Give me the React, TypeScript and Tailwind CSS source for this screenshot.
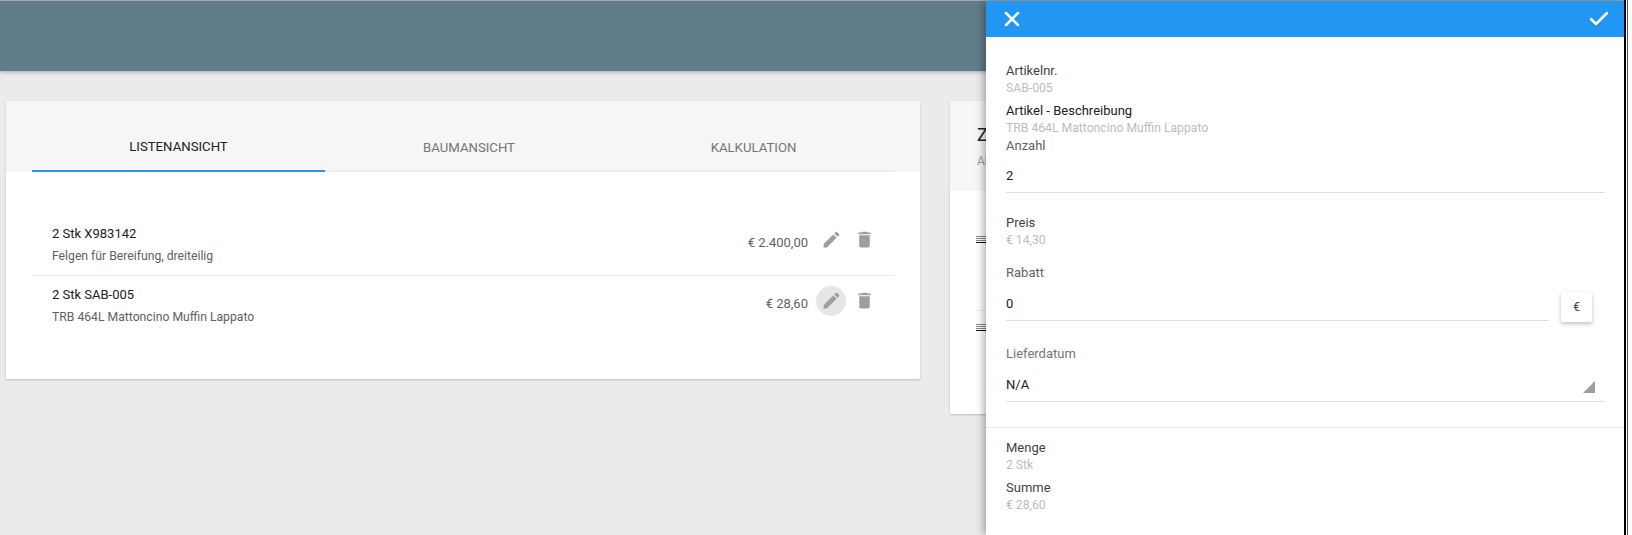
import { Check, X } from 'lucide-react';

const font = { fontFamily: 'Roboto, sans-serif' };

const PencilIcon = () => (
  <svg viewBox="0 0 24 24" className="w-[21px] h-[21px] mb-[1px] fill-[#9e9e9e]">
    <path d="M3 17.25V21h3.75L17.81 9.94l-3.75-3.75L3 17.25zM20.71 7.04a1 1 0 0 0 0-1.41l-2.34-2.34a1 1 0 0 0-1.41 0l-1.83 1.83 3.75 3.75 1.83-1.83z" />
  </svg>
);

const TrashIcon = () => (
  <svg viewBox="0 0 24 24" className="w-[21px] h-[21px] mb-[1px] fill-[#9e9e9e]">
    <path d="M6 19c0 1.100.9 2 2 2h8c1.100 0 2-.9 2-2V7H6v12zM19 4h-3.500l-1-1h-5l-1 1H5v2h14V4z" />
  </svg>
);

const ListGlyph = () => (
  <div className="w-[10px] flex flex-col gap-[1px]">
    <div className="h-[1px] bg-[#8a8a8a]" />
    <div className="h-[1px] bg-[#8a8a8a]" />
    <div className="h-[1px] bg-[#8a8a8a]" />
    <div className="h-[1px] bg-[#111111]" />
  </div>
);

const Row = ({ title, sub, price, active }: { title: string; sub: string; price: string; active?: boolean }) => (
  <div className="h-[61px] flex justify-between pl-[20px] pr-[15px] border-b border-[#eeeeee] last:border-b-0">
    <div className="pt-[9px]">
      <p className="text-[13px] leading-[20px] text-[#212121]">{title}</p>
      <p className="text-[12.2px] leading-[16px] mt-[4px] text-[#616161]">{sub}</p>
    </div>
    <div className="flex items-start pt-[10px]">
      <span className="text-[13px] leading-[20px] text-[#616161] mt-[8px] mr-[8px]">{price}</span>
      <span className={`w-[30px] h-[30px] rounded-full flex items-center justify-center ${active ? 'bg-[#e6e6e6]' : ''}`}>
        <PencilIcon />
      </span>
      <span className="w-[30px] h-[30px] ml-[3px] flex items-center justify-center">
        <TrashIcon />
      </span>
    </div>
  </div>
);

const Info = ({ label, value, last }: { label: string; value: string; last?: boolean }) => (
  <div className={last ? 'mb-[5px]' : 'mb-[6px]'}>
    <p className="text-[13px] leading-[17px] text-[#424242]">{label}</p>
    <p className="text-[12.2px] leading-[18px] text-[#bdbdbd]">{value}</p>
  </div>
);

export default function App() {
  return (
    <div style={font} className="relative w-[1632px] h-[535px] overflow-hidden bg-[#ebebeb]">
      <div className="h-[71px] bg-[#607d8b] border-t border-[#a8a8a8] shadow-[0_1px_4px_rgba(0,0,0,0.3)]" />

      <div className="flex items-start mt-[30px] pl-[6px] gap-[30px]">
        <div className="w-[914px] h-[278px] bg-white shadow-[0_1px_2px_rgba(0,0,0,0.2)]">
          <div className="h-[71px] bg-[#f6f6f6] px-[26px]">
            <div className="flex h-[71px] border-b-2 border-[#efefef]">
              <div className="w-[293px] h-[71px] flex items-center justify-center pt-[23px] text-[13.2px] text-[#212121] border-b-2 border-[#2196f3]">LISTENANSICHT</div>
              <div className="w-[288px] h-[71px] flex items-center justify-center pt-[23px] text-[13.2px] text-[#757575]">BAUMANSICHT</div>
              <div className="flex-1 h-[71px] flex items-center justify-center pt-[23px] text-[13.2px] text-[#757575]">KALKULATION</div>
            </div>
          </div>
          <div className="mx-[26px] mt-[43px]">
            <Row title="2 Stk X983142" sub="Felgen für Bereifung, dreiteilig" price="€ 2.400,00" />
            <Row title="2 Stk SAB-005" sub="TRB 464L Mattoncino Muffin Lappato" price="€ 28,60" active />
          </div>
        </div>

        <div className="w-[300px] h-[313px] bg-white shadow-[0_1px_2px_rgba(0,0,0,0.2)]">
          <div className="h-[90px] bg-[#f6f6f6] pl-[27px] pt-[22px]">
            <p className="text-[18px] leading-[24px] text-[#212121]">Z</p>
            <p className="text-[12px] leading-[16px] mt-[6px] text-[#9e9e9e]">Al</p>
          </div>
          <div className="pl-[26px] pr-[16px]">
            <div className="h-[120px] border-b border-[#eeeeee] pt-[45px]">
              <ListGlyph />
            </div>
            <div className="pt-[13px]">
              <ListGlyph />
            </div>
          </div>
        </div>
      </div>

      <div className="absolute top-[1px] left-[986px] bottom-0 w-[638px] bg-white shadow-[-2px_0_8px_rgba(0,0,0,0.35)]">
        <div className="h-[36px] bg-[#2196f3] flex items-center justify-between pl-[14px] pr-[13px] text-white">
          <X size={24} strokeWidth={2.5} />
          <Check size={24} strokeWidth={2.5} />
        </div>
        <div className="pl-[20px] pr-[19px] pt-[25px]">
          <Info label="Artikelnr." value="SAB-005" />
          <p className="text-[13px] leading-[17px] text-[#212121] mt-[-1px]">Artikel - Beschreibung</p>
          <p className="text-[12.2px] leading-[18px] text-[#bdbdbd]">TRB 464L Mattoncino Muffin Lappato</p>
          <p className="text-[13px] leading-[17px] text-[#616161]">Anzahl</p>
          <div className="h-[39px] pt-[12px] text-[13px] leading-[20px] text-[#212121] border-b border-[#e0e0e0]">2</div>
          <div className="mt-[21px]">
            <Info label="Preis" value="€ 14,30" />
          </div>
          <p className="text-[13px] leading-[17px] text-[#616161] mt-[15px]">Rabatt</p>
          <div className="flex items-start">
            <div className="flex-1 h-[40px] pt-[13px] text-[13px] leading-[20px] text-[#212121] border-b border-[#e0e0e0]">0</div>
            <div className="w-[31px] h-[30px] ml-[12px] mr-[13px] mt-[11px] rounded-[2px] bg-white shadow-[0_2px_4px_rgba(0,0,0,0.25)] flex items-center justify-center text-[12px] text-[#424242]">€</div>
          </div>
          <p className="text-[13px] leading-[17px] text-[#757575] mt-[23px]">Lieferdatum</p>
          <div className="relative h-[40px] pt-[13px] text-[13px] leading-[20px] text-[#212121] border-b border-[#e0e0e0]">
            N/A
            <svg viewBox="0 0 12 12" className="absolute right-[10px] top-[19px] w-[12px] h-[12px] fill-[#9e9e9e]">
              <path d="M12 0V12H0Z" />
            </svg>
          </div>
        </div>
        <div className="mt-[25px] border-t border-[#eeeeee] px-[20px] pt-[11px]">
          <Info label="Menge" value="2 Stk" last />
          <Info label="Summe" value="€ 28,60" last />
        </div>
      </div>

      {/* window edge of the screenshot */}
      <div className="absolute top-0 right-0 bottom-0 w-[8px] bg-white flex">
        <div className="w-[2px] bg-black" />
        <div className="w-[1px] ml-[1px] bg-[#555555]" />
      </div>
    </div>
  );
}
